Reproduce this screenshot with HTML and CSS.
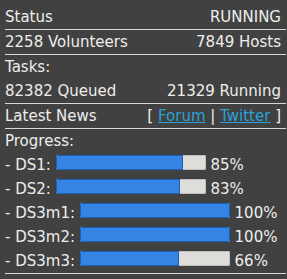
FILE: index.html
```html
<!DOCTYPE html>
<html lang="en">
<head>
    <meta charset="UTF-8">
    <title>Status</title>
    <link rel="stylesheet" href="styles.css">
</head>
<body>
    <div class="panel">
        <div class="row">
            <span>Status</span>
            <span>RUNNING</span>
        </div>
        <div class="row">
            <span>2258 Volunteers</span>
            <span>7849 Hosts</span>
        </div>
        <div class="block">
            <div>Tasks:</div>
            <div class="line">
                <span>82382 Queued</span>
                <span>21329 Running</span>
            </div>
        </div>
        <div class="row">
            <span>Latest News</span>
            <span>[ <a href="#">Forum</a> | <a href="#">Twitter</a> ]</span>
        </div>
        <div class="block">
            <div>Progress:</div>
            <div>- DS1: <span class="bar"><span class="fill" style="width: 85%"></span></span> 85%</div>
            <div>- DS2: <span class="bar"><span class="fill" style="width: 83%"></span></span> 83%</div>
            <div>- DS3m1: <span class="bar"><span class="fill" style="width: 100%"></span></span> 100%</div>
            <div>- DS3m2: <span class="bar"><span class="fill" style="width: 100%"></span></span> 100%</div>
            <div>- DS3m3: <span class="bar"><span class="fill" style="width: 66%"></span></span> 66%</div>
        </div>
    </div>
</body>
</html>
```

FILE: styles.css
```css
body {
    margin: 0;
    background-color: #414141;
    color: #eeeeec;
    font-family: "DejaVu Sans", sans-serif;
    font-size: 15px;
}
.panel {
    padding: 5px 1px 5px 5px;
    line-height: 24px;
}
.row, .line {
    display: flex;
    justify-content: space-between;
    padding-right: 5px;
}
.row, .block {
    border-bottom: 1px solid #d8d8d8;
}
a {
    color: #2aa1d8;
}
.bar {
    display: inline-block;
    width: 150px;
    height: 15px;
    background-color: #deddda;
    box-shadow: inset 0 0 0 1px #c0bfbc;
    border-radius: 2px;
    overflow: hidden;
}
.fill {
    display: block;
    height: 100%;
    box-sizing: border-box;
    background-color: #3584e4;
    border: 1px solid #1c5fb5;
}
```
